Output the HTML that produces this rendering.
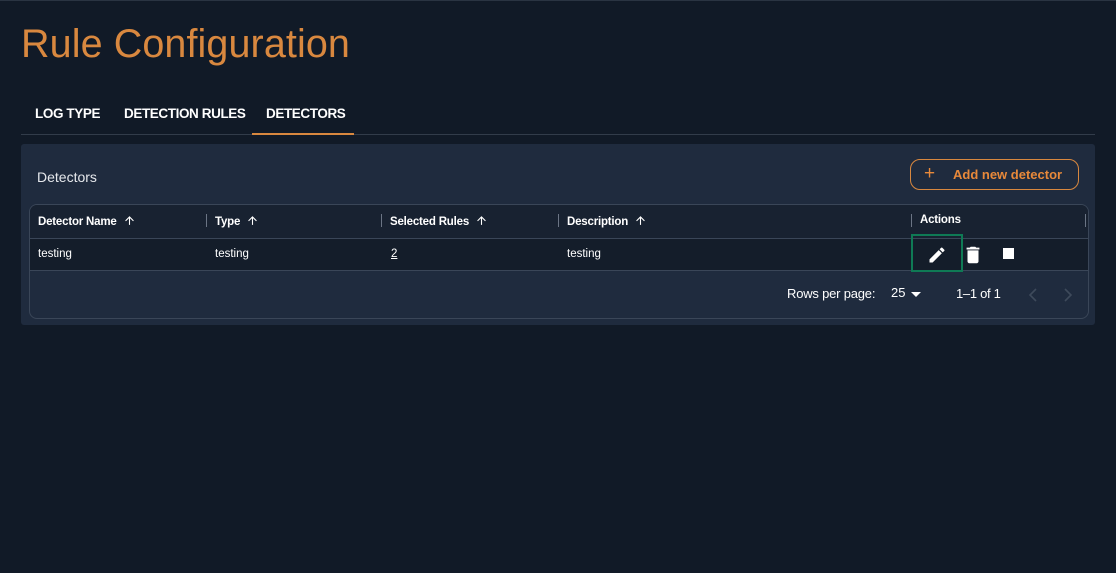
<!DOCTYPE html>
<html><head><style>
html,body{margin:0}
body{width:1116px;height:573px;background:#111a27;font-family:"Liberation Sans",sans-serif;position:relative;overflow:hidden;box-sizing:border-box;border-top:1px solid #2a3442}
.a{position:absolute}
h1{position:absolute;left:21px;top:21px;margin:0;font-weight:300;font-size:39.5px;color:#d9883f;letter-spacing:0.1px}
.tab{position:absolute;top:105px;font-size:13.5px;font-weight:bold;color:#fff;letter-spacing:-0.4px}
.card{left:21px;top:143px;width:1074px;height:181px;background:#1f2b3e;border-radius:3px}
.tbl{left:29px;top:203px;width:1058px;height:113px;border:1px solid #3a4658;border-radius:8px;overflow:hidden}
.th{font-size:11.5px;font-weight:bold;color:#fff;top:213px;letter-spacing:-0.2px}
.td{font-size:11.5px;color:#fff;top:247px}
.sep{width:1px;height:13px;background:#6b7585;top:213px}
.ar{display:inline-block;vertical-align:-2px;margin-left:6px}
</style></head><body>
<h1>Rule Configuration</h1>
<div class="tab" style="left:35px">LOG TYPE</div>
<div class="tab" style="left:124px">DETECTION RULES</div>
<div class="tab" style="left:266px">DETECTORS</div>
<div class="a" style="left:21px;top:133px;width:1074px;height:1px;background:#323c4a"></div>
<div class="a" style="left:252px;top:132px;width:102px;height:2px;background:#d9883f"></div>
<div class="a card"></div>
<div class="a" style="left:37px;top:168px;font-size:14px;color:#e6e8ec">Detectors</div>
<div class="a" style="left:910px;top:158px;width:169px;height:31px;border:1px solid #d9883f;border-radius:10px;box-sizing:border-box;color:#e8893a;font-size:13px;font-weight:bold"><span class="a" style="left:13px;top:3px;font-size:19px;font-weight:normal">+</span><span class="a" style="left:42px;top:7px">Add new detector</span></div>
<div class="a tbl">
 <div class="a" style="left:0;top:0;width:1058px;height:33px;background:#182231;border-bottom:1px solid #3a4658"></div>
 <div class="a" style="left:0;top:34px;width:1058px;height:31px;background:#141d2a;border-bottom:1px solid #3a4658"></div>
</div>
<svg width="0" height="0" style="position:absolute"><defs><symbol id="up" viewBox="0 0 24 24"><path fill="#fff" d="M4 12l1.41 1.41L11 7.83V20h2V7.83l5.58 5.59L20 12l-8-8-8 8z"/></symbol></defs></svg>
<div class="a th" style="left:38px">Detector Name<svg class="ar" width="13" height="13"><use href="#up"/></svg></div>
<div class="a sep" style="left:206px"></div><div class="a th" style="left:215px">Type<svg class="ar" width="13" height="13"><use href="#up"/></svg></div>
<div class="a sep" style="left:381px"></div><div class="a th" style="left:390px">Selected Rules<svg class="ar" width="13" height="13"><use href="#up"/></svg></div>
<div class="a sep" style="left:558px"></div><div class="a th" style="left:567px">Description<svg class="ar" width="13" height="13"><use href="#up"/></svg></div>
<div class="a sep" style="left:911px"></div><div class="a th" style="left:920px">Actions</div>
<div class="a sep" style="left:1085px"></div>
<div class="a td" style="left:38px">testing</div>
<div class="a td" style="left:215px">testing</div>
<div class="a td" style="left:391px;text-decoration:underline">2</div>
<div class="a td" style="left:567px">testing</div>
<div class="a" style="left:911px;top:233px;width:48px;height:34px;border:2px solid #0f7a55"></div>
<svg class="a" style="left:927px;top:244px" width="20" height="20" viewBox="0 0 24 24"><path fill="#fff" d="M3 17.25V21h3.75L17.81 9.94l-3.75-3.75L3 17.25zM20.71 7.04a1 1 0 000-1.41l-2.34-2.34a1 1 0 00-1.41 0l-1.83 1.83 3.75 3.75 1.83-1.83z"/></svg>
<svg class="a" style="left:962px;top:243px" width="22" height="22" viewBox="0 0 24 24"><path fill="#fff" d="M6 19c0 1.1.9 2 2 2h8c1.1 0 2-.9 2-2V7H6v12zM19 4h-3.5l-1-1h-5l-1 1H5v2h14V4z"/></svg>
<div class="a" style="left:1003px;top:247px;width:11px;height:11px;background:#fff"></div>
<div class="a" style="left:787px;top:285px;font-size:13px;color:#fff;letter-spacing:-0.2px">Rows per page:</div>
<div class="a" style="left:891px;top:284px;font-size:13px;color:#fff">25</div>
<svg class="a" style="left:911px;top:291px" width="10" height="5"><path d="M0 0h10L5 5z" fill="#fff"/></svg>
<div class="a" style="left:956px;top:285px;font-size:13px;color:#fff;letter-spacing:-0.3px">1–1 of 1</div>
<svg class="a" style="left:1028px;top:287px" width="10" height="14"><path d="M8 1L2 7l6 6" stroke="#3e4a5b" stroke-width="1.6" fill="none"/></svg>
<svg class="a" style="left:1063px;top:287px" width="10" height="14"><path d="M2 1l6 6-6 6" stroke="#3e4a5b" stroke-width="1.6" fill="none"/></svg>
</body></html>
